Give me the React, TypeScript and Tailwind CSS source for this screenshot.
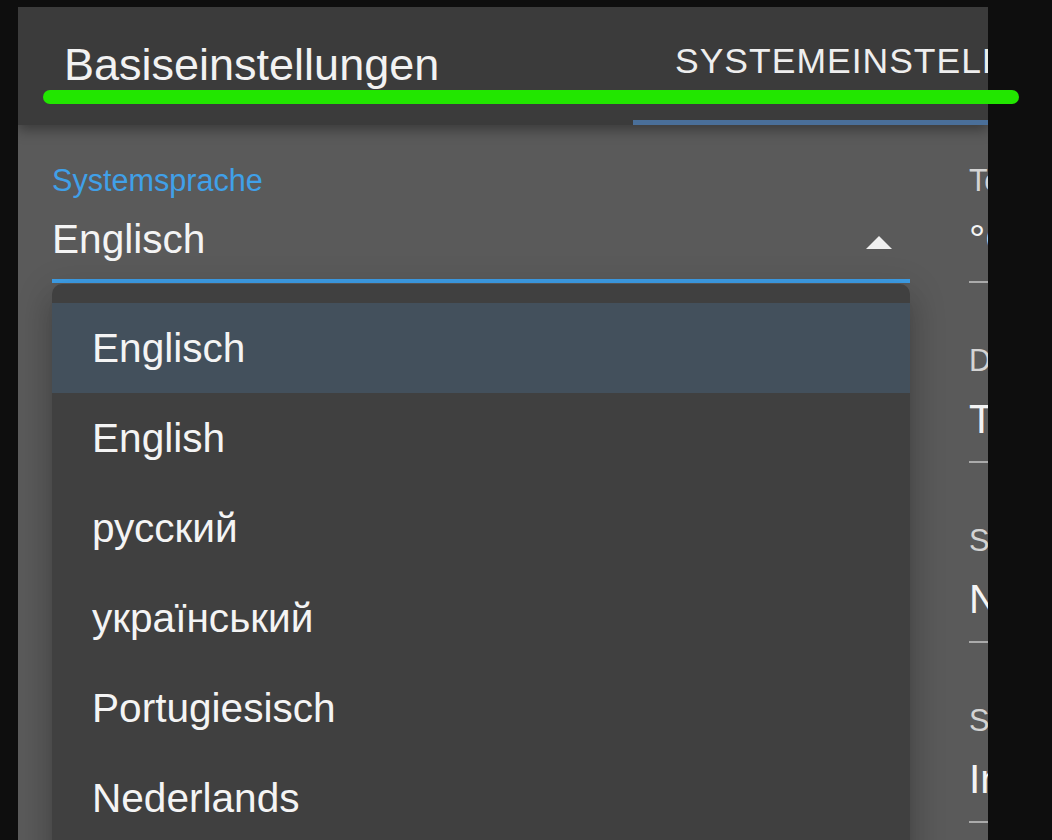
import React from 'react';

const LANGUAGES = ['Englisch', 'English', 'русский', 'український', 'Portugiesisch', 'Nederlands', 'Français'];

const SIDE_FIELDS = [
  { label: 'Temperatureinheit', value: '°C' },
  { label: 'Datumsformat', value: 'TT.MM.JJJJ' },
  { label: 'Sekundenanzeige', value: 'Nein' },
  { label: 'Sensoranzeige', value: 'Innen' },
];

const Field: React.FC<{ label: string; value: string; focused?: boolean; children?: React.ReactNode }> = ({
  label,
  value,
  focused,
  children,
}) => (
  <div className="mb-[62px]">
    <div className={`text-[30.6px] leading-[30px] whitespace-nowrap ${focused ? 'text-[#40a0e8]' : 'text-[#d4d4d4]'}`}>
      {label}
    </div>
    <div className="mt-[24px] flex h-[40px] items-start justify-between">
      <span className="text-[40.6px] leading-[40px] whitespace-nowrap text-[#f4f4f4]">{value}</span>
      {children}
    </div>
    {focused ? (
      <div className="mt-[20px] h-[4px] bg-[#3d9de6]" />
    ) : (
      <div className="mt-[22px] h-[2px] bg-[#ababab]" />
    )}
  </div>
);

export default function App() {
  return (
    <div className="relative h-[840px] w-[1052px] overflow-hidden bg-[#0e0e0e] pl-[18px] pt-[7px] font-[family-name:Liberation_Sans,Arial,sans-serif]">
      <div className="flex h-[833px] w-[970px] flex-col overflow-hidden bg-[#5a5a5a]">
        {/* app bar with tabs */}
        <div className="relative z-10 flex h-[118px] shrink-0 bg-[#3b3b3b] shadow-[0_5px_12px_rgba(0,0,0,0.35)]">
          <div className="w-[615px] shrink-0 pl-[46px] pt-[36px] text-[45px] leading-[44px] whitespace-nowrap text-[#f2f2f2]">
            Basiseinstellungen
          </div>
          <div className="relative flex-1 pl-[42px] pt-[37px] text-[35.5px] leading-[35px] tracking-[1px] whitespace-nowrap uppercase text-[#eeeeee]">
            Systemeinstellungen
            <div className="absolute bottom-0 left-0 right-0 h-[5px] bg-[#4a6f99]" />
          </div>
        </div>

        {/* settings form */}
        <div className="flex gap-[59px] pl-[34px] pt-[40px]">
          <div className="relative w-[858px] shrink-0">
            <Field label="Systemsprache" value="Englisch" focused>
              <svg width="26" height="13" viewBox="0 0 26 13" className="mr-[18px] mt-[17px]">
                <path d="M0 13 L13 0 L26 13 Z" fill="#f0f0f0" />
              </svg>
            </Field>

            {/* open select menu */}
            <div className="absolute left-0 right-0 top-[119px] z-20 rounded-[10px] bg-[#404040] pt-[19px] shadow-[0_12px_12px_-8px_rgba(0,0,0,0.2),0_20px_25px_2px_rgba(0,0,0,0.14),0_8px_35px_5px_rgba(0,0,0,0.12)]">
              {LANGUAGES.map((lang, i) => (
                <div
                  key={lang}
                  className={`h-[90px] pl-[40px] text-[40.6px] leading-[90px] text-[#f4f4f4] ${i === 0 ? 'bg-[#43505c]' : ''}`}
                >
                  {lang}
                </div>
              ))}
            </div>
          </div>

          <div className="w-[300px] shrink-0">
            {SIDE_FIELDS.map((f) => (
              <Field key={f.label} label={f.label} value={f.value} />
            ))}
          </div>
        </div>
      </div>

      {/* highlight stroke */}
      <div className="absolute left-[43px] top-[90px] z-30 h-[14px] w-[976px] rounded-full bg-[#22e600]" />
    </div>
  );
}
